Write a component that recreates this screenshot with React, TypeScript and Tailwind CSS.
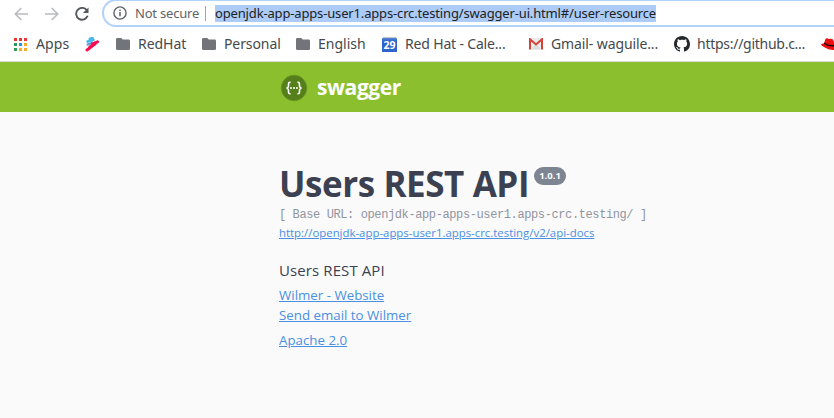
import React from "react";

const chrome = "font-['Noto_Sans',sans-serif]";
const page = "font-['Open_Sans',sans-serif]";

function Arrow({ flip = false }: { flip?: boolean }) {
  return (
    <svg width="14" height="14" viewBox="0 0 14 14" className={flip ? "rotate-180" : ""}>
      <path d="M14 7H1.5M7.3 1L1.3 7l6 6" fill="none" stroke="#b9bbbe" strokeWidth="1.6" />
    </svg>
  );
}

function Reload() {
  return (
    <svg width="14" height="14" viewBox="0 0 14 14">
      <path d="M11.8 3.3A5.9 5.9 0 1 0 12.6 8.8" fill="none" stroke="#54575b" strokeWidth="1.9" />
      <path d="M13.5 0.4V6H7.9z" fill="#54575b" />
    </svg>
  );
}

function Folder() {
  return (
    <svg width="14" height="12" viewBox="0 0 14 12">
      <path d="M1.3 0h4l1.4 1.6h6A1.3 1.3 0 0 1 14 2.9v7.8a1.3 1.3 0 0 1-1.3 1.3H1.3A1.3 1.3 0 0 1 0 10.7V1.3A1.3 1.3 0 0 1 1.3 0z" fill="#717579" />
    </svg>
  );
}

const dots = ["#ee3535", "#ee3535", "#ee3535", "#2b9e53", "#2492ee", "#f5ad26", "#2b9e53", "#f5ad26", "#f5ad26"];

function AppsGrid() {
  return (
    <div className="grid grid-cols-3 gap-[2px]">
      {dots.map((c, i) => (
        <span key={i} className="h-[3px] w-[3px]" style={{ backgroundColor: c }} />
      ))}
    </div>
  );
}

function Ribbon() {
  return (
    <svg width="15" height="15" viewBox="0 0 15 15">
      <path d="M4.800 1.800l2.800-.6M2.600 4.600l5.800-1.800" stroke="#46b7ec" strokeWidth="2.600" strokeLinecap="round" />
      <path d="M2.600 7.500l4.500-1.800" stroke="#5a9be0" strokeWidth="2.200" strokeLinecap="round" />
      <path d="M7.500 6.800l5-2M2 12.900l2.500-1.700" stroke="#fa0d52" strokeWidth="3" strokeLinecap="round" />
      <path d="M5 10.200l5-3.600" stroke="#fa0d52" strokeWidth="3.600" strokeLinecap="round" />
    </svg>
  );
}

function Calendar() {
  return (
    <svg width="15" height="15" viewBox="0 0 15 15">
      <path d="M1 0h13v3H1z" fill="#c3c4c7" />
      <path d="M0 1.500h15V15H0z" fill="#2d65cc" />
      <path d="M0 1.500h15v2H0z" fill="#3f75d6" />
      <text x="7.6" y="12" textAnchor="middle" fontFamily="Open Sans, sans-serif" fontSize="10.5" fontWeight="700" fill="#fff">29</text>
    </svg>
  );
}

function Gmail() {
  return (
    <svg width="14" height="12" viewBox="0 0 14 12">
      <path d="M0 0h14v11.5H0z" fill="#ebebeb" />
      <path d="M2 11.5L7 6.5l5 5z" fill="#dcdcdc" />
      <path d="M1 11.5V1.2l6 5.2 6-5.2v10.3" fill="none" stroke="#d54339" strokeWidth="2" />
    </svg>
  );
}

function GitHub() {
  return (
    <svg width="16" height="16" viewBox="0 0 16 16">
      <path fill="#24292e" d="M8 0C3.58 0 0 3.58 0 8c0 3.54 2.29 6.53 5.47 7.59.4.07.55-.17.55-.38 0-.19-.01-.82-.01-1.49-2.01.37-2.53-.49-2.69-.94-.09-.23-.48-.94-.82-1.13-.28-.15-.68-.52-.01-.53.63-.01 1.08.58 1.23.82.72 1.21 1.87.87 2.33.66.07-.52.28-.87.51-1.07-1.78-.2-3.64-.89-3.64-3.95 0-.87.31-1.59.82-2.15-.08-.2-.36-1.02.08-2.12 0 0 .67-.21 2.2.82.64-.18 1.32-.27 2-.27s1.36.09 2 .27c1.53-1.04 2.2-.82 2.2-.82.44 1.1.16 1.92.08 2.12.51.56.82 1.27.82 2.15 0 3.07-1.87 3.75-3.65 3.95.29.25.54.73.54 1.48 0 1.07-.01 1.93-.01 2.2 0 .21.15.46.55.38A8.01 8.01 0 0 0 16 8c0-4.42-3.58-8-8-8z" />
    </svg>
  );
}

function RedHat() {
  return (
    <svg width="16" height="13" viewBox="0 0 16 13" className="shrink-0">
      <path d="M3 5.6L4.300 1.400Q5 0 6.700.5L8 .9l2-.2q2 .1 2.600 2l1 3.900q2.200 1.700 2.200 3.300-.3 2.200-4 2.100-4.800-.3-8.400-2.800Q-.6 7.300.1 6.200.8 5.400 3 5.600z" fill="#ee0f0f" />
      <path d="M3.200 5q2.800 3 9.800 2.700" fill="none" stroke="#1c0505" strokeWidth="1.400" />
    </svg>
  );
}

function Mark({ className, icon, text, label }: { className: string; icon: React.ReactNode; text?: string; label: string }) {
  return (
    <div className={`flex shrink-0 items-center ${className}`}>
      {icon}
      {text && <span className={`whitespace-nowrap pb-[2px] ${label}`}>{text}</span>}
    </div>
  );
}

function SwaggerMark() {
  return (
    <svg width="28" height="28" viewBox="0 0 28 28" className="mt-px">
      <circle cx="14" cy="14" r="12.900" fill="#547f1b" stroke="#6f9d24" strokeWidth="0.8" />
      <path d="M10.600 8.300C8.500 8.200 8.500 9 8.500 11.200S8.200 13.700 6.500 14c1.700.3 2 .7 2 2.800s0 3 2.100 2.900M17.400 8.300c2.100-.1 2.100.7 2.100 2.900s.3 2.500 2 2.800c-1.700.3-2 .7-2 2.800s0 3-2.100 2.900" fill="none" stroke="#fff" strokeWidth="1.600" />
      <g fill="#fff">
        <circle cx="11" cy="14" r="1" />
        <circle cx="14" cy="14" r="1" />
        <circle cx="17" cy="14" r="1" />
      </g>
    </svg>
  );
}

const link = "self-start whitespace-nowrap text-[#4990e2] underline";

export default function App() {
  return (
    <div className="flex h-[418px] w-[834px] flex-col overflow-hidden bg-[#fafafa]">
      <div className={`flex h-[27px] shrink-0 bg-white ${chrome}`}>
        <div className="flex w-[102px] shrink-0 items-center gap-[16.5px] pl-[14px]">
          <Arrow />
          <Arrow flip />
          <Reload />
        </div>
        <div className="-mt-px flex h-7 flex-1 items-center rounded-l-full border-2 border-r-0 border-[#b3d2f8] pl-[9px] text-[13px] leading-[17px]">
          <svg width="14" height="14" viewBox="0 0 14 14">
            <circle cx="7" cy="7" r="6.100" fill="none" stroke="#5f6368" strokeWidth="1.400" />
            <path d="M7 6v4.300M7 3.500v1.500" stroke="#5f6368" strokeWidth="1.500" />
          </svg>
          <span className="ml-2 w-[70px] whitespace-nowrap text-[#5f6368] tracking-[-0.2px]">Not secure</span>
          <span className="h-[15px] w-px bg-[#a3a5a8]" />
          <span className="ml-[9px] w-[441px] whitespace-nowrap bg-[#accbf7] text-[#202124] tracking-[-0.157px]">
            openjdk-app-apps-user1.apps-crc.testing/swagger-ui.html#/user-resource
          </span>
        </div>
      </div>
      <div className={`flex h-[35px] shrink-0 items-center overflow-hidden border-b border-[#dadce0] bg-white pl-[14px] text-[14px] text-[#45494d] ${chrome}`}>
        <Mark className="w-[71px]" icon={<AppsGrid />} text="Apps" label="ml-[9px] tracking-[0.1px]" />
        <Mark className="w-[31px]" icon={<Ribbon />} label="" />
        <Mark className="w-[86px]" icon={<Folder />} text="RedHat" label="ml-2 tracking-[-0.05px]" />
        <Mark className="w-[94px]" icon={<Folder />} text="Personal" label="ml-2 tracking-[-0.1px]" />
        <Mark className="w-[86px]" icon={<Folder />} text="English" label="ml-2" />
        <Mark className="w-[147px]" icon={<Calendar />} text="Red Hat - Cale..." label="ml-2 tracking-[-0.17px]" />
        <Mark className="w-[145px]" icon={<Gmail />} text="Gmail- waguile..." label="ml-2 tracking-[-0.11px]" />
        <Mark className="w-[147px]" icon={<GitHub />} text="https://github.c..." label="ml-[7px] tracking-[-0.27px]" />
        <RedHat />
      </div>
      <header className={`flex h-[50px] shrink-0 items-center bg-[#8cbf2e] pl-[280px] ${page}`}>
        <SwaggerMark />
        <span className="ml-[9px] text-[21px] font-bold leading-[30px] tracking-[-0.4px] text-white">swagger</span>
      </header>
      <main className={`flex flex-col pl-[279px] text-[#3b4151] ${page}`}>
        <div className="mt-[48px] flex h-[48px] items-start">
          <h1 className="w-[249px] whitespace-nowrap text-[35px] font-bold leading-[48px] tracking-[-0.42px]">Users REST API</h1>
          <span className="ml-[6px] mt-[7px] flex h-[18px] w-8 items-center justify-center rounded-full bg-[#7d8492] text-[9.500px] font-bold text-white">1.0.1</span>
        </div>
        <pre className="whitespace-pre font-['Liberation_Mono',monospace] text-[12px] leading-[14px] tracking-[-0.39px] text-[#9094a0]">[ Base URL: openjdk-app-apps-user1.apps-crc.testing/ ]</pre>
        <a className={`mt-[3px] text-[11.4px] leading-[16px] ${link}`}>http://openjdk-app-apps-user1.apps-crc.testing/v2/api-docs</a>
        <p className="mt-[19px] text-[15px] leading-[20px] tracking-[0.1px]">Users REST API</p>
        <a className={`mt-[5px] text-[13.300px] leading-[20px] ${link}`}>Wilmer - Website</a>
        <a className={`text-[13.300px] leading-[20px] ${link}`}>Send email to Wilmer</a>
        <a className={`mt-[5px] text-[13.300px] leading-[20px] ${link}`}>Apache 2.0</a>
      </main>
    </div>
  );
}
